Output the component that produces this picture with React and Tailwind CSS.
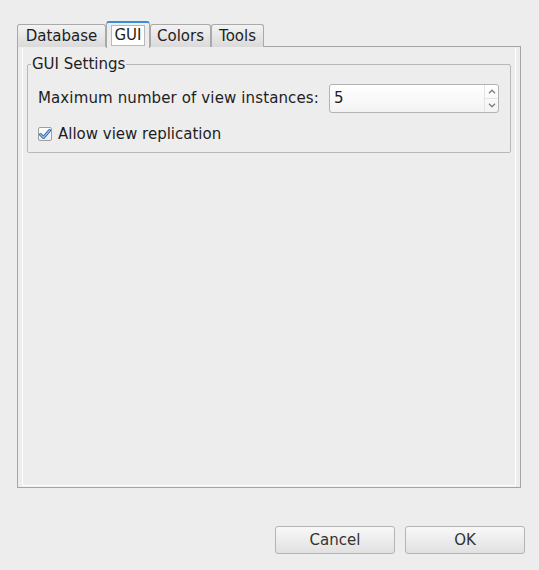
import React from "react";

const TABS = [
  { label: "Database", w: "w-[89px]" },
  { label: "GUI", w: "w-[44px]", active: true },
  { label: "Colors", w: "w-[61px]" },
  { label: "Tools", w: "w-[53px]" },
];

function Tab({ label, w, active }) {
  if (active) {
    return (
      <div
        className={`${w} relative z-10 h-[27px] -mb-px border-x border-[#a9a9a9] border-t-2 border-t-[#3a8fd6] rounded-t-[3px] bg-[#ededed] flex items-center justify-center`}
      >
        <span className="h-[21px] px-[2px] border border-[#b9b9b9] bg-white flex items-center leading-none">
          {label}
        </span>
      </div>
    );
  }
  return (
    <div
      className={`${w} h-[23px] border-x border-t border-[#a9a9a9] rounded-t-[3px] bg-gradient-to-b from-[#f3f3f3] to-[#dadada] flex items-center justify-center`}
    >
      {label}
    </div>
  );
}

function Chevron({ up }) {
  return (
    <svg width="8" height="5" viewBox="0 0 8 5" className="text-[#808080]">
      <path
        d={up ? "M1 4.2 L4 1.2 L7 4.2" : "M1 0.8 L4 3.8 L7 0.8"}
        fill="none"
        stroke="currentColor"
        strokeWidth="1.4"
      />
    </svg>
  );
}

function SpinBox({ value }) {
  return (
    <div className="w-[170px] h-[29px] ml-auto flex border border-[#b3b3b3] rounded-[3px] bg-gradient-to-b from-white to-[#f3f3f3]">
      <div className="flex-1 pl-[4px] flex items-center">{value}</div>
      <div className="w-[14px] flex flex-col border-l border-[#e4e4e4]">
        <div className="flex-1 flex items-center justify-center border-b border-[#e4e4e4]">
          <Chevron up />
        </div>
        <div className="flex-1 flex items-center justify-center">
          <Chevron />
        </div>
      </div>
    </div>
  );
}

function CheckBox() {
  return (
    <div className="w-[14px] h-[14px] border border-[#a0a0a0] rounded-[2px] bg-gradient-to-b from-white to-[#eeeeee] flex items-center justify-center">
      <svg width="12" height="12" viewBox="0 0 12 12">
        <path
          d="M1.5 6.5 L4.5 9.5 L10.5 2.5"
          fill="none"
          stroke="#2f66b3"
          strokeWidth="3"
          strokeLinecap="round"
          strokeLinejoin="round"
        />
        <path
          d="M1.5 6.5 L4.5 9.5 L10.5 2.5"
          fill="none"
          stroke="#8fc0ee"
          strokeWidth="1.2"
          strokeLinecap="round"
          strokeLinejoin="round"
        />
      </svg>
    </div>
  );
}

function Button({ children }) {
  return (
    <button className="w-[120px] h-[28px] border border-[#b4b4b4] rounded-[3px] bg-gradient-to-b from-[#f8f8f8] to-[#e1e1e1] text-[#333]">
      {children}
    </button>
  );
}

export default function App() {
  return (
    <div className="w-[539px] h-[570px] bg-[#ededed] text-[15px] text-[#1e1e1e] font-['DejaVu_Sans',sans-serif] pt-[20px] overflow-hidden">
      {/* tab bar */}
      <div className="flex items-end h-[27px] pl-[17px]">
        {TABS.map((t) => (
          <Tab key={t.label} {...t} />
        ))}
      </div>

      {/* tab page */}
      <div className="ml-[17px] -mt-px w-[504px] h-[442px] border border-[#a5a5a5] bg-[#ededed] pt-px">
        <div className="mx-[4px] h-[438px] border-x border-b border-white pt-[7px] pl-[4px]">
          <fieldset className="w-[484px] border border-[#b8b8b8] rounded-[2px] px-0 pb-[9px]">
            <legend className="ml-[3px] px-[1px] leading-[18px]">GUI Settings</legend>
            <div className="pl-[10px] pr-[11px] pt-[11px]">
              <div className="flex items-center">
                <span className="tracking-[0.12px]">Maximum number of view instances:</span>
                <SpinBox value="5" />
              </div>
              <div className="flex items-center gap-[6px] mt-[12px] h-[18px]">
                <CheckBox />
                <span>Allow view replication</span>
              </div>
            </div>
          </fieldset>
        </div>
      </div>

      {/* buttons */}
      <div className="flex justify-end gap-[10px] pr-[14px] mt-[38px]">
        <Button>Cancel</Button>
        <Button>OK</Button>
      </div>
    </div>
  );
}
